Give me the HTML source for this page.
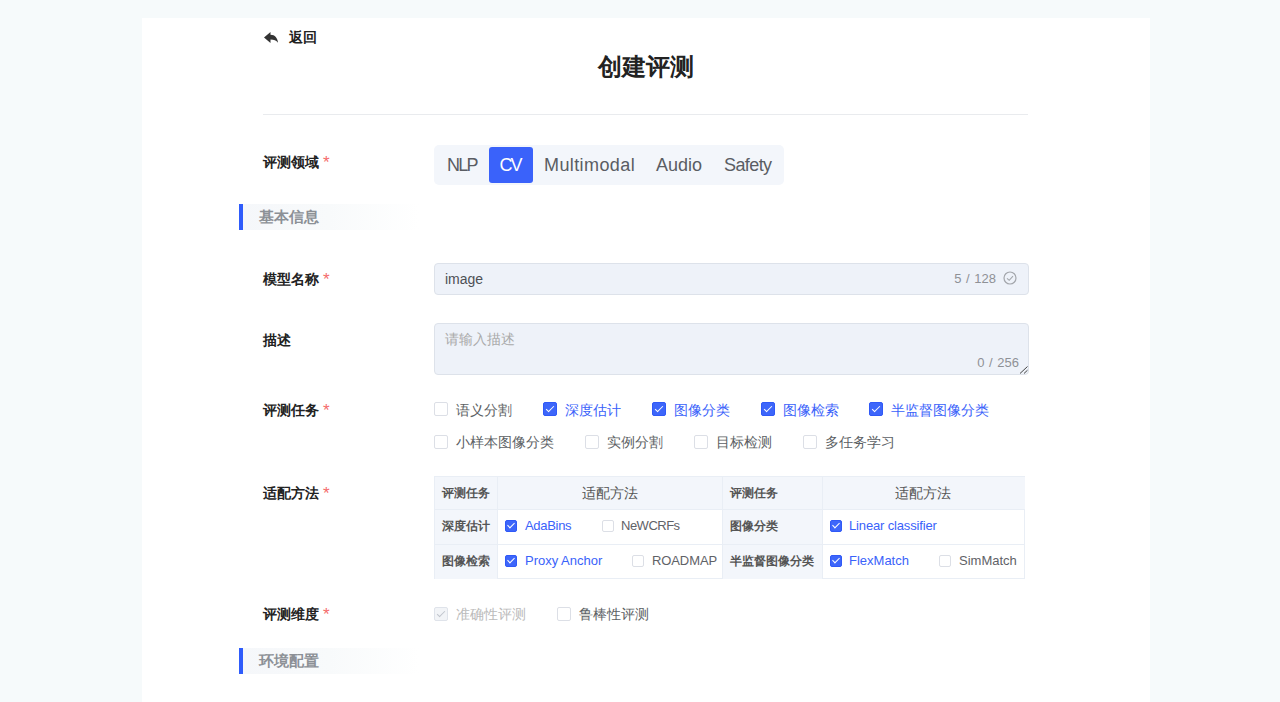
<!DOCTYPE html>
<html><head><meta charset="utf-8">
<style>
*{box-sizing:border-box;margin:0;padding:0}
html,body{width:1280px;height:702px;overflow:hidden}
body{background:#f6fafb;font-family:"Liberation Sans",sans-serif;color:#333;position:relative}
.card{position:absolute;left:142px;top:18px;width:1008px;height:700px;background:#fff}
.a{position:absolute;white-space:nowrap}
.lbl{position:absolute;left:263px;font-size:14px;font-weight:bold;color:#222;line-height:20px}
.lbl i{font-style:normal;color:#f56c6c;margin-left:4px;font-weight:normal;font-size:17px;line-height:20px;vertical-align:top;position:relative;top:1px}
.hr{position:absolute;left:263px;top:114px;width:765px;height:1px;background:#e9ebee}
.seg{position:absolute;left:434px;top:145px;width:350px;height:40px;background:#f3f6fb;border-radius:5px}
.seg span{position:absolute;top:0;height:40px;line-height:40px;font-size:18px;color:#5a5d63}
.seg .on{background:#3a62fa;color:#fff;top:2px;height:36px;line-height:36px;border-radius:3px;text-align:center}
.sec{position:absolute;left:239px;width:180px;height:26px;background:linear-gradient(90deg,#f5f7fa 0%,#f8fafb 50%,#fff 100%)}
.sec b{position:absolute;left:0;top:0;width:4px;height:26px;background:#2f5cfb}
.sec span{position:absolute;left:20px;top:0;line-height:26px;font-size:15px;font-weight:bold;color:#8c9096}
.inp{position:absolute;left:434px;width:595px;background:#eef2f9;border:1px solid #dde2ea;border-radius:4px}
.cb{position:absolute;width:14px;height:14px;border:1px solid #dcdfe6;border-radius:2px;background:#fff}
.cb.on{background:#3d66fa;border-color:#3059f7}
.cb.on:after{content:"";position:absolute;left:4px;top:1px;width:3px;height:7px;border:solid #fff;border-width:0 1.5px 1.5px 0;transform:rotate(45deg)}
.ct{position:absolute;font-size:14px;line-height:20px;color:#5c5f64}
.ct.on{color:#3a62fa}
.tbl{position:absolute;left:434px;top:476px;width:591px;height:103px;border:1px solid #e9eef5;background:#fff}
.th{position:absolute;background:#f3f6fb}
.tk{position:absolute;background:#f3f6fb}
.hl{position:absolute;height:1px;background:#e9eef5}
.vl{position:absolute;width:1px;background:#e9eef5}
.tt{position:absolute;font-size:12px;font-weight:bold;line-height:16px;color:#555;white-space:nowrap}
.tm{font-size:14px;line-height:20px;color:#555}
.tx{font-size:13px;line-height:18px;color:#5f6267}
.tx.on{color:#3a62fa}
.cb.s{width:12px;height:12px}
.cb.s.on:after{left:3px;top:0px;width:3px;height:6px}
.cb.dis{background:#f2f4f7;border-color:#dfe3ea}
.cb.dis:after{content:"";position:absolute;left:4px;top:1px;width:3px;height:7px;border:solid #c0c4cc;border-width:0 1.5px 1.5px 0;transform:rotate(45deg)}
</style></head><body>
<div class="card"></div>

<!-- back -->
<svg class="a" style="left:264px;top:32px" width="14" height="11" viewBox="0 0 14 11"><path d="M0 5.5 L6.5 0 L6.5 2.8 C11 2.9 13.6 6 14 10.8 C12.4 8.4 10 7.6 6.5 7.6 L6.5 11 Z" fill="#333"/></svg>
<div class="a" style="left:289px;top:27px;font-size:14px;font-weight:bold;line-height:20px;color:#222">返回</div>
<div class="a" style="left:598px;top:51px;font-size:24px;font-weight:bold;line-height:32px;color:#222">创建评测</div>
<div class="hr"></div>

<div class="lbl" style="top:152px">评测领域<i>*</i></div>
<div class="seg">
  <span style="left:13px;letter-spacing:-1.7px">NLP</span>
  <span class="on" style="left:55px;width:44px;letter-spacing:-2px;text-indent:-2px">CV</span>
  <span style="left:110px;letter-spacing:0.4px">Multimodal</span>
  <span style="left:222px">Audio</span>
  <span style="left:290px;letter-spacing:-0.6px">Safety</span>
</div>

<div class="sec" style="top:204px"><b></b><span>基本信息</span></div>

<div class="lbl" style="top:269px">模型名称<i>*</i></div>
<div class="inp" style="top:263px;height:32px">
  <span class="a" style="left:10px;top:6px;font-size:14px;line-height:18px;color:#4d5055">image</span>
  <span class="a" style="right:32px;top:6px;font-size:13px;line-height:18px;color:#8e9196;word-spacing:1px">5 / 128</span>
  <svg class="a" style="right:11px;top:7px" width="14" height="14" viewBox="0 0 14 14"><circle cx="7" cy="7" r="6" fill="none" stroke="#a3a6ab" stroke-width="1.2"/><path d="M4 7.3 L6.2 9.3 L10 5.2" fill="none" stroke="#a3a6ab" stroke-width="1.1"/></svg>
</div>

<div class="lbl" style="top:330px">描述</div>
<div class="inp" style="top:323px;height:52px">
  <span class="a" style="left:10px;top:5px;font-size:14px;line-height:20px;color:#aaa">请输入描述</span>
  <span class="a" style="right:9px;top:30px;font-size:13px;line-height:18px;color:#8e9196;word-spacing:1px">0 / 256</span>
  <svg class="a" style="right:0px;bottom:0px" width="10" height="10" viewBox="0 0 10 10"><path d="M2 9.5 L9.5 2.5 M6 9.5 L9.5 6.2" stroke="#444" stroke-width="1"/></svg>
</div>

<div class="lbl" style="top:400px">评测任务<i>*</i></div>

<div class="lbl" style="top:483px">适配方法<i>*</i></div>


<!-- tasks -->
<div class="cb" style="left:434px;top:402px"></div><div class="ct" style="left:456px;top:400px">语义分割</div>
<div class="cb on" style="left:543px;top:402px"></div><div class="ct on" style="left:565px;top:400px">深度估计</div>
<div class="cb on" style="left:652px;top:402px"></div><div class="ct on" style="left:674px;top:400px">图像分类</div>
<div class="cb on" style="left:761px;top:402px"></div><div class="ct on" style="left:783px;top:400px">图像检索</div>
<div class="cb on" style="left:869px;top:402px"></div><div class="ct on" style="left:891px;top:400px">半监督图像分类</div>
<div class="cb" style="left:434px;top:435px"></div><div class="ct" style="left:456px;top:432px">小样本图像分类</div>
<div class="cb" style="left:585px;top:435px"></div><div class="ct" style="left:607px;top:432px">实例分割</div>
<div class="cb" style="left:694px;top:435px"></div><div class="ct" style="left:716px;top:432px">目标检测</div>
<div class="cb" style="left:803px;top:435px"></div><div class="ct" style="left:825px;top:432px">多任务学习</div>

<!-- table -->
<div class="tbl">
  <div class="th" style="left:0;top:0;width:63px;height:33px"></div>
  <div class="th" style="left:63px;top:0;width:225px;height:33px"></div>
  <div class="th" style="left:288px;top:0;width:100px;height:33px"></div>
  <div class="th" style="left:388px;top:0;width:202px;height:33px"></div>
  <div class="tk" style="left:0;top:33px;width:63px;height:35px"></div>
  <div class="tk" style="left:0;top:68px;width:63px;height:34px"></div>
  <div class="tk" style="left:288px;top:33px;width:100px;height:35px"></div>
  <div class="tk" style="left:288px;top:68px;width:100px;height:34px"></div>
  <div class="hl" style="left:0;top:32px;width:590px"></div>
  <div class="hl" style="left:0;top:67px;width:590px"></div>
  <div class="vl" style="left:62px;top:0;height:102px"></div>
  <div class="vl" style="left:287px;top:0;height:102px"></div>
  <div class="vl" style="left:387px;top:0;height:102px"></div>
</div>
<div class="tt" style="left:442px;top:485px">评测任务</div>
<div class="a tm" style="left:582px;top:483px">适配方法</div>
<div class="tt" style="left:730px;top:485px">评测任务</div>
<div class="a tm" style="left:895px;top:483px">适配方法</div>
<div class="tt" style="left:442px;top:518px">深度估计</div>
<div class="tt" style="left:442px;top:553px">图像检索</div>
<div class="tt" style="left:730px;top:518px">图像分类</div>
<div class="tt" style="left:730px;top:553px">半监督图像分类</div>
<div class="cb on s" style="left:505px;top:520px"></div><div class="a tx on" style="left:525px;top:517px;letter-spacing:-0.3px">AdaBins</div>
<div class="cb s" style="left:602px;top:520px"></div><div class="a tx" style="left:621px;top:517px;letter-spacing:-0.5px">NeWCRFs</div>
<div class="cb on s" style="left:505px;top:555px"></div><div class="a tx on" style="left:525px;top:552px">Proxy Anchor</div>
<div class="cb s" style="left:632px;top:555px"></div><div class="a tx" style="left:652px;top:552px;letter-spacing:-0.1px">ROADMAP</div>
<div class="cb on s" style="left:830px;top:520px"></div><div class="a tx on" style="left:849px;top:517px;letter-spacing:-0.15px">Linear classifier</div>
<div class="cb on s" style="left:830px;top:555px"></div><div class="a tx on" style="left:849px;top:552px">FlexMatch</div>
<div class="cb s" style="left:939px;top:555px"></div><div class="a tx" style="left:959px;top:552px">SimMatch</div>

<!-- dims -->
<div class="cb dis" style="left:434px;top:607px"></div><div class="ct" style="left:456px;top:604px;color:#bbb">准确性评测</div>
<div class="cb" style="left:557px;top:607px"></div><div class="ct" style="left:579px;top:604px">鲁棒性评测</div>

<div class="lbl" style="top:604px">评测维度<i>*</i></div>

<div class="sec" style="top:648px"><b></b><span>环境配置</span></div>

</body></html>
